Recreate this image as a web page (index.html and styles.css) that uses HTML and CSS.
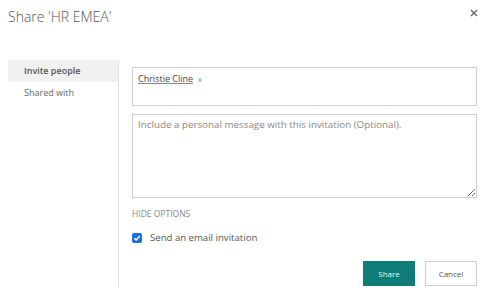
FILE: index.html
```html
<!DOCTYPE html>
<html>
<head>
<meta charset="utf-8">
<link rel="stylesheet" href="styles.css">
</head>
<body>
<div class="dialog">
  <div class="header">
    <div class="title">Share 'HR EMEA'</div>
    <div class="close">
      <svg width="8" height="8" viewBox="0 0 8 8"><path d="M1 1L7 7M7 1L1 7" stroke="#666" stroke-width="1.4"/></svg>
    </div>
  </div>
  <div class="main">
    <div class="nav">
      <div class="nav-item active">Invite people</div>
      <div class="nav-item">Shared with</div>
    </div>
    <div class="content">
      <div class="people">
        <span class="person">Christie Cline</span><span class="remove">x</span>
      </div>
      <textarea class="message" placeholder="Include a personal message with this invitation (Optional)."></textarea>
      <div class="options">HIDE OPTIONS</div>
      <div class="check-row">
        <span class="checkbox"><svg width="10" height="10" viewBox="0 0 10 10"><path d="M2.3 5.2L4.2 7L7.8 3" stroke="#fff" stroke-width="1.5" fill="none"/></svg></span>
        <span class="check-label">Send an email invitation</span>
      </div>
      <div class="buttons">
        <button class="btn primary">Share</button>
        <button class="btn">Cancel</button>
      </div>
    </div>
  </div>
</div>
</body>
</html>
```
FILE: styles.css
```css
html, body {
  margin: 0;
  padding: 0;
  background: #fff;
}
body {
  font-family: "Open Sans", "Noto Sans", sans-serif;
  color: #555;
  width: 488px;
  height: 300px;
  overflow: hidden;
}
.dialog {
  width: 488px;
}
.header {
  display: flex;
  justify-content: space-between;
  align-items: flex-start;
  padding: 7px 10px 0 8px;
  height: 51px;
}
.title {
  font-size: 14px;
  font-weight: 300;
  color: #555;
  line-height: 20px;
}
.close {
  padding-top: 2px;
  line-height: 0;
}
.main {
  display: flex;
}
.nav {
  width: 110px;
  margin-left: 8px;
  border-right: 1px solid #e3e3e3;
  height: 227px;
  margin-top: 2px;
}
.nav-item {
  font-size: 9px;
  color: #666;
  padding-left: 16px;
  height: 22px;
  line-height: 22px;
}
.nav-item.active {
  background: #f1f1f1;
  font-weight: 600;
  color: #555;
}
.content {
  flex: 1;
  padding: 9px 11px 0 13px;
  display: flex;
  flex-direction: column;
}
.people {
  border: 1px solid #cfcfcf;
  padding: 5px 0 0 5px;
  box-sizing: border-box;
  height: 39px;
  font-size: 9px;
  line-height: 12px;
}
.person {
  color: #444;
  text-decoration: underline;
  text-decoration-color: #888;
}
.remove {
  color: #3aa09a;
  font-size: 7px;
  margin-left: 5px;
}
.message {
  margin: 8px 0 0 0;
  height: 84px;
  box-sizing: border-box;
  border: 1px solid #cfcfcf;
  border-radius: 0;
  padding: 3px 5px;
  font-family: "Open Sans", "Noto Sans", sans-serif;
  font-size: 9.8px;
  color: #555;
  resize: vertical;
  outline: none;
}
.message::placeholder {
  color: #888;
}
.options {
  font-size: 8.5px;
  color: #888;
  margin-top: 10px;
  line-height: 12px;
}
.check-row {
  display: flex;
  align-items: center;
  margin-top: 12px;
}
.checkbox {
  width: 10px;
  height: 10px;
  background: #1a6fe0;
  border-radius: 2px;
  line-height: 0;
  display: inline-block;
}
.check-label {
  font-size: 9.6px;
  color: #555;
  margin-left: 8px;
  line-height: 12px;
}
.buttons {
  display: flex;
  justify-content: flex-end;
  gap: 10px;
  margin-top: 17px;
}
.btn {
  width: 52px;
  height: 25px;
  border: 1px solid #cfcfcf;
  background: #fff;
  font-family: "Open Sans", "Noto Sans", sans-serif;
  font-size: 8px;
  color: #555;
  padding: 0;
  border-radius: 0;
}
.btn.primary {
  background: #0f7c78;
  border-color: #0f7c78;
  color: #dff;
}
```
